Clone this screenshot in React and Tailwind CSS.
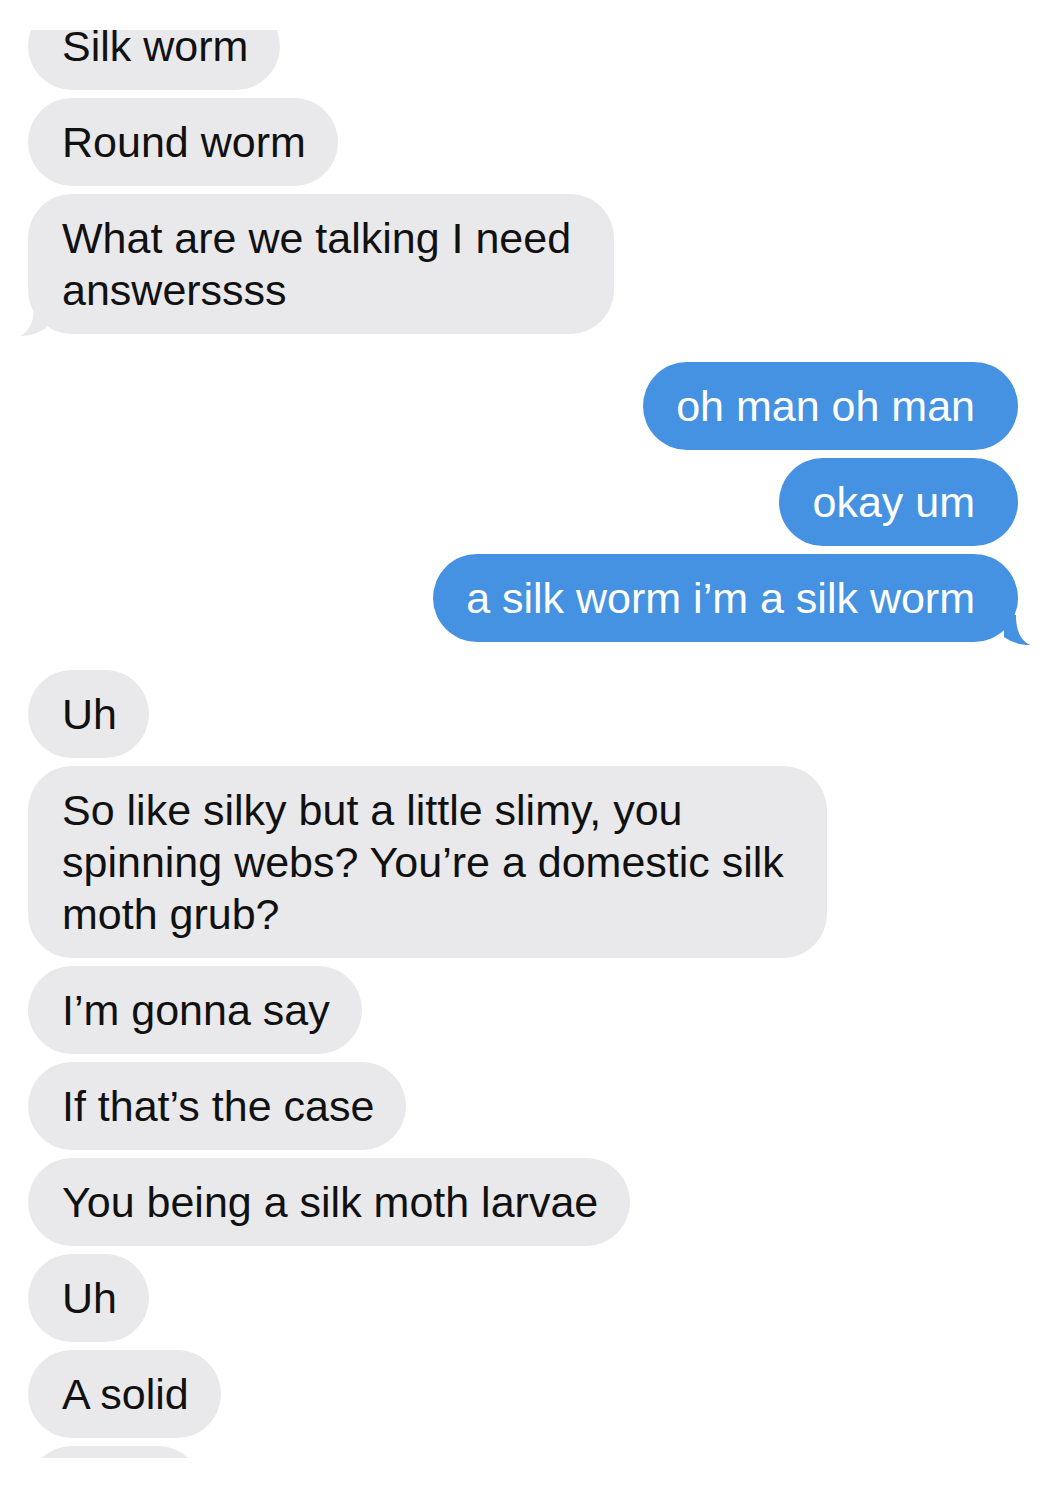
import React from 'react';

const messages = [
    { id: 1, from: 'them', text: 'Silk worm' },
    { id: 2, from: 'them', text: 'Round worm' },
    { id: 3, from: 'them', text: 'What are we talking I need\nanswerssss', tail: true, wide: true },
    { id: 4, from: 'me', text: 'oh man oh man', gapBefore: true },
    { id: 5, from: 'me', text: 'okay um' },
    { id: 6, from: 'me', text: 'a silk worm i\u2019m a silk worm', tail: true },
    { id: 7, from: 'them', text: 'Uh', gapBefore: true },
    { id: 8, from: 'them', text: 'So like silky but a little slimy, you\nspinning webs? You\u2019re a domestic silk\nmoth grub?', wide: true },
    { id: 9, from: 'them', text: 'I\u2019m gonna say' },
    { id: 10, from: 'them', text: 'If that\u2019s the case' },
    { id: 11, from: 'them', text: 'You being a silk moth larvae' },
    { id: 12, from: 'them', text: 'Uh' },
    { id: 13, from: 'them', text: 'A solid' },
    { id: 14, from: 'them', text: '\u00a0\u00a0\u00a0\u00a0\u00a0\u00a0\u00a0\u00a0\u00a0' },
];

// little curled tail under the last bubble of a group
const Tail = ({ side }) => {
    if (side === 'left') {
        return (
            <svg className="absolute bottom-[-2px] left-[-8px]" width="30" height="30" viewBox="0 0 30 30">
                <path d="M14 0 C14 15 10 25 0 30 C10 30 19 27 26 22 L26 0 Z" fill="#e9e9eb" />
            </svg>
        );
    }
    return (
        <svg className="absolute bottom-[-3px] right-[-12px]" width="30" height="30" viewBox="0 0 30 30">
            <path d="M16 0 C16 15 20 25 30 30 C20 30 11 27 4 22 L4 0 Z" fill="#4592e2" />
        </svg>
    );
};

const Bubble = ({ msg }) => {
    const mine = msg.from === 'me';
    let cls = 'relative rounded-[44px] bg-[#e9e9eb] py-[18px] pl-[34px] pr-[32px] text-[#111111]';
    if (mine) cls = 'relative rounded-[44px] bg-[#4592e2] py-[18px] pl-[33px] pr-[43px] text-white';
    else if (msg.wide) cls = 'relative rounded-[44px] bg-[#e9e9eb] py-[18px] pl-[34px] pr-[43px] text-[#111111]';
    return (
        <div className={`flex ${mine ? 'justify-end' : 'justify-start'} ${msg.gapBefore ? 'mt-[20px]' : ''}`}>
            <div className={cls}>
                {msg.tail && <Tail side={mine ? 'right' : 'left'} />}
                <p className="relative whitespace-pre-line text-[43px] leading-[52px]">{msg.text}</p>
            </div>
        </div>
    );
};

const App = () => {
    return (
        <div className="min-h-[1500px] bg-white pt-[30px] font-['Liberation_Sans',Arial,sans-serif]">
            <div className="h-[1428px] overflow-hidden">
                <div className="-mt-[28px] flex flex-col gap-2 pl-[28px] pr-[32px]">
                    {messages.map(msg => (
                        <Bubble key={msg.id} msg={msg} />
                    ))}
                </div>
            </div>
        </div>
    );
};

export default App;
